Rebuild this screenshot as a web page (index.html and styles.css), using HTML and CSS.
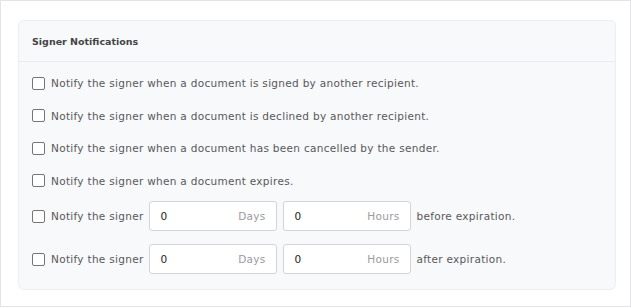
FILE: index.html
```html
<!DOCTYPE html>
<html>
<head>
<meta charset="utf-8">
<link rel="stylesheet" href="styles.css">
</head>
<body>
<div class="page">
  <div class="card">
    <div class="card-header">Signer Notifications</div>
    <div class="card-body">
      <label class="row"><span class="check"></span><span class="label">Notify the signer when a document is signed by another recipient.</span></label>
      <label class="row"><span class="check"></span><span class="label">Notify the signer when a document is declined by another recipient.</span></label>
      <label class="row"><span class="check"></span><span class="label">Notify the signer when a document has been cancelled by the sender.</span></label>
      <label class="row"><span class="check"></span><span class="label">Notify the signer when a document expires.</span></label>
      <div class="row input-row first">
        <span class="check"></span><span class="label">Notify the signer</span>
        <div class="field"><span class="value">0</span><span class="unit">Days</span></div>
        <div class="field"><span class="value">0</span><span class="unit">Hours</span></div>
        <span class="label">before expiration.</span>
      </div>
      <div class="row input-row">
        <span class="check"></span><span class="label">Notify the signer</span>
        <div class="field"><span class="value">0</span><span class="unit">Days</span></div>
        <div class="field"><span class="value">0</span><span class="unit">Hours</span></div>
        <span class="label">after expiration.</span>
      </div>
    </div>
  </div>
</div>
</body>
</html>
```
FILE: styles.css
```css
* { box-sizing: border-box; }
html, body { margin: 0; padding: 0; background: #ffffff; }
body { font-family: "DejaVu Sans", "Open Sans", sans-serif; }
.page {
  width: 631px;
  height: 307px;
  border: 1px solid #e4e4e6;
  padding: 19px 0 0 17px;
}
.card {
  width: 598px;
  height: 270px;
  border: 1px solid #eceef3;
  border-radius: 6px;
  background: #f8f9fa;
}
.card-header {
  height: 41px;
  border-bottom: 1px solid #eaecf1;
  padding-left: 13px;
  display: flex;
  align-items: center;
  font-size: 9.5px;
  font-weight: bold;
  color: #444446;
}
.card-body {
  padding: 5px 0 0 13px;
}
.row {
  display: flex;
  align-items: center;
  height: 32.5px;
}
.check {
  width: 13px;
  height: 13px;
  border: 1.5px solid #767678;
  border-radius: 2px;
  background: #fff;
  margin-right: 6px;
  flex: none;
}
.label {
  font-size: 10.5px;
  letter-spacing: 0.3px;
  color: #58585a;
  white-space: nowrap;
}
.input-row { height: 30px; margin-top: 13px; }
.input-row.first { margin-top: 4px; }
.input-row .label:nth-child(2) { margin-right: 5px; }
.field {
  width: 128px;
  height: 30px;
  border: 1px solid #d3d4da;
  border-radius: 3px;
  background: #fff;
  display: flex;
  align-items: center;
  justify-content: space-between;
  padding: 0 10px 0 11px;
  margin-right: 6px;
  font-size: 10.5px;
  letter-spacing: 0.3px;
}
.value { color: #222; }
.unit { color: #9a9aa0; }
```
